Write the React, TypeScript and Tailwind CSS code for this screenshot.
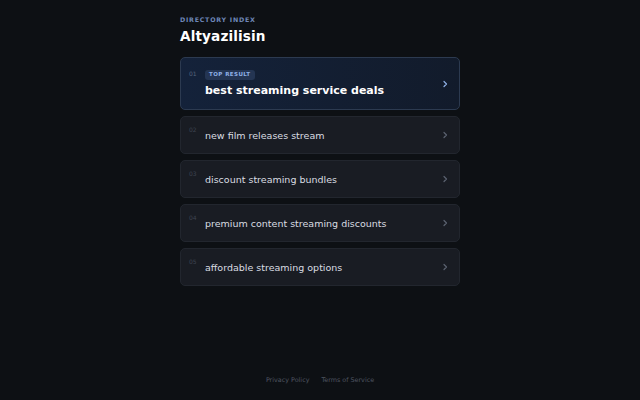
import React from "react";

const items = [
  "new film releases stream",
  "discount streaming bundles",
  "premium content streaming discounts",
  "affordable streaming options",
];

function Chevron({ className }: { className: string }) {
  return (
    <svg width="8" height="8" viewBox="0 0 8 8" className={className} fill="none">
      <path d="M3 1.5 L5.5 4 L3 6.5" stroke="currentColor" strokeWidth="1.2" strokeLinecap="round" strokeLinejoin="round" />
    </svg>
  );
}

export default function App() {
  return (
    <div
      className="min-h-screen w-full bg-[#0d1014] flex flex-col items-center"
      style={{ fontFamily: '"DejaVu Sans", sans-serif' }}
    >
      <div className="w-[280px] pt-[16px]">
        <div className="text-[6.3px] font-bold tracking-[0.12em] text-[#6e87b8] leading-[8px]">
          DIRECTORY INDEX
        </div>
        <h1 className="mt-[2px] text-[13.6px] font-bold text-white leading-[20px] tracking-[0.01em]">Altyazilisin</h1>
        <div className="mt-[11px] flex flex-col gap-[6px]">
          <div className="h-[53px] rounded-[5px] border border-[#2c3a50] bg-gradient-to-r from-[#14223a] to-[#121b2b] flex items-center pl-[8px] pr-[10px]">
            <div className="self-start pt-[12px] w-[16px] text-[6px] text-[#55627a] leading-[8px]">01</div>
            <div className="flex-1 flex flex-col items-start">
              <span className="rounded-[3px] bg-[#243553] px-[4px] h-[10px] flex items-center text-[5.5px] font-bold tracking-[0.08em] text-[#8fb0e6]">
                TOP RESULT
              </span>
              <span className="mt-[4px] text-[11px] font-bold text-white leading-[14px]">
                best streaming service deals
              </span>
            </div>
            <Chevron className="text-[#8fb0e6]" />
          </div>
          {items.map((t, i) => (
            <div
              key={t}
              className="h-[38px] rounded-[5px] border border-[#22262e] bg-[#191c23] flex items-center pl-[8px] pr-[10px]"
            >
              <div className="self-start pt-[9px] w-[16px] text-[6px] text-[#3d4350] leading-[8px]">
                0{i + 2}
              </div>
              <div className="flex-1 text-[9.5px] text-[#d9dce2] leading-[14px] pt-[1px]">{t}</div>
              <Chevron className="text-[#5b6270]" />
            </div>
          ))}
        </div>
      </div>
      <div className="mt-auto pb-[14px] flex gap-[12px] text-[6.4px] text-[#4f5561]">
        <span>Privacy Policy</span>
        <span>Terms of Service</span>
      </div>
    </div>
  );
}
